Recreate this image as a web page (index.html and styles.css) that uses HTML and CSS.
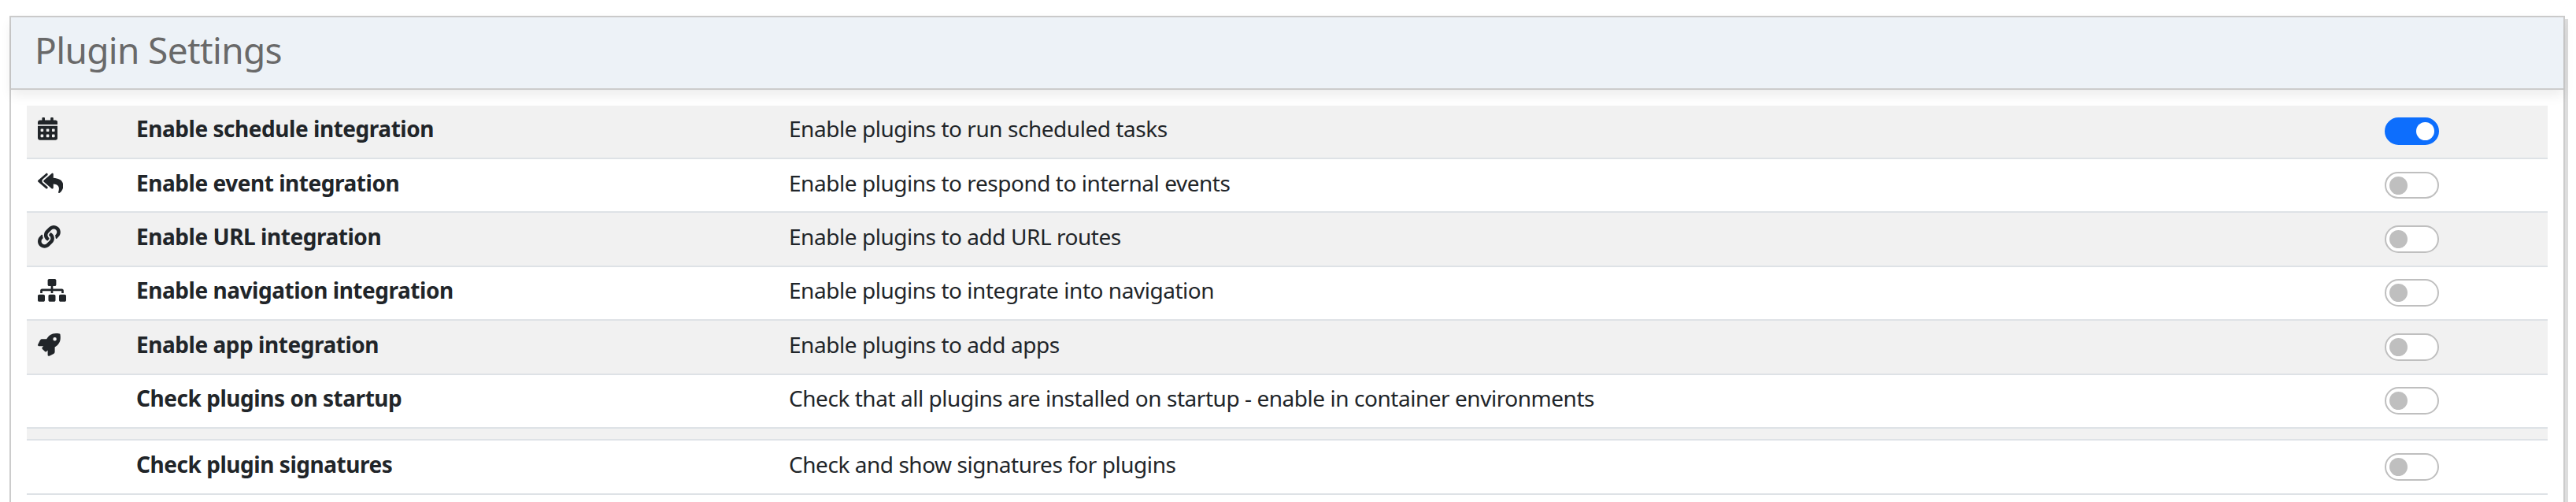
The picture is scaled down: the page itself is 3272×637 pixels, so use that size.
FILE: index.html
```html
<!DOCTYPE html>
<html lang="en">
<head>
<meta charset="utf-8">
<title>Plugin Settings</title>
<link rel="stylesheet" href="styles.css">
</head>
<body>
<main class="panel">
  <header class="panel-heading"><h1 class="title">Plugin Settings</h1></header>
  <div class="settings">
    <div class="row">
      <svg class="icon" viewBox="0 0 448 512"><path d="M0 464c0 26.500 21.500 48 48 48h352c26.500 0 48-21.500 48-48V192H0v272zm320-196c0-6.600 5.400-12 12-12h40c6.600 0 12 5.400 12 12v40c0 6.600-5.400 12-12 12h-40c-6.600 0-12-5.400-12-12v-40zm0 128c0-6.600 5.400-12 12-12h40c6.600 0 12 5.400 12 12v40c0 6.600-5.400 12-12 12h-40c-6.600 0-12-5.400-12-12v-40zM192 268c0-6.600 5.400-12 12-12h40c6.600 0 12 5.400 12 12v40c0 6.600-5.400 12-12 12h-40c-6.600 0-12-5.400-12-12v-40zm0 128c0-6.600 5.400-12 12-12h40c6.600 0 12 5.400 12 12v40c0 6.600-5.400 12-12 12h-40c-6.600 0-12-5.400-12-12v-40zM64 268c0-6.600 5.400-12 12-12h40c6.600 0 12 5.400 12 12v40c0 6.600-5.400 12-12 12H76c-6.600 0-12-5.400-12-12v-40zm0 128c0-6.600 5.400-12 12-12h40c6.600 0 12 5.400 12 12v40c0 6.600-5.400 12-12 12H76c-6.600 0-12-5.400-12-12v-40zM400 64h-48V16c0-8.800-7.200-16-16-16h-32c-8.800 0-16 7.200-16 16v48H160V16c0-8.800-7.200-16-16-16h-32c-8.800 0-16 7.200-16 16v48H48C21.500 64 0 85.500 0 112v48h448v-48c0-26.500-21.500-48-48-48z"/></svg>
      <strong class="name">Enable schedule integration</strong>
      <span class="desc">Enable plugins to run scheduled tasks</span>
      <span class="switch on"></span>
    </div>
    <div class="row low">
      <svg class="icon" viewBox="0 0 576 512"><path d="M136.309 189.836L312.313 37.851C327.720 24.546 352 35.348 352 56.015v82.763c129.182 10.231 224 52.212 224 183.548 0 61.441-39.582 122.309-83.333 154.132-13.653 9.931-33.111-2.533-28.077-18.631 38.512-123.162-3.922-169.482-112.590-182.015v84.175c0 20.701-24.300 31.453-39.687 18.164L136.309 226.164c-11.071-9.561-11.086-26.753 0-36.328zm-128 36.328L184.313 378.150C199.700 391.439 224 380.687 224 359.986v-15.818l-108.606-93.785A55.960 55.960 0 0 1 96 207.998a55.953 55.953 0 0 1 19.393-42.380L224 71.832V56.015c0-20.667-24.280-31.469-39.687-18.164L8.309 189.836c-11.086 9.575-11.071 26.767 0 36.328z"/></svg>
      <strong class="name">Enable event integration</strong>
      <span class="desc">Enable plugins to respond to internal events</span>
      <span class="switch short"></span>
    </div>
    <div class="row tall low">
      <svg class="icon" viewBox="0 0 512 512"><path d="M326.612 185.391c59.747 59.809 58.927 155.698.36 214.590-.11.12-.24.25-.36.37l-67.200 67.200c-59.270 59.270-155.699 59.262-214.960 0-59.270-59.260-59.270-155.700 0-214.960l37.106-37.106c9.840-9.840 26.786-3.300 27.294 10.606.648 17.722 3.826 35.527 9.690 52.721 1.986 5.822.567 12.262-3.783 16.612l-13.087 13.087c-28.026 28.026-28.905 73.660-1.155 101.960 28.024 28.579 74.086 28.749 102.325.51l67.200-67.190c28.191-28.191 28.073-73.757 0-101.830-3.701-3.694-7.429-6.564-10.341-8.569a16.037 16.037 0 0 1-6.947-12.606c-.396-10.567 3.348-21.456 11.698-29.806l21.054-21.055c5.521-5.521 14.182-6.199 20.584-1.731a152.482 152.482 0 0 1 20.522 17.197zM467.547 44.449c-59.261-59.262-155.690-59.270-214.960 0l-67.200 67.200c-.12.12-.25.25-.36.37-58.566 58.892-59.387 154.781.36 214.590a152.454 152.454 0 0 0 20.521 17.196c6.402 4.468 15.064 3.789 20.584-1.731l21.054-21.055c8.350-8.350 12.094-19.239 11.698-29.806a16.037 16.037 0 0 0-6.947-12.606c-2.912-2.005-6.640-4.875-10.341-8.569-28.073-28.073-28.191-73.639 0-101.830l67.200-67.190c28.239-28.239 74.300-28.069 102.325.51 27.750 28.300 26.872 73.934-1.155 101.960l-13.087 13.087c-4.350 4.350-5.769 10.790-3.783 16.612 5.864 17.194 9.042 34.999 9.690 52.721.509 13.906 17.454 20.446 27.294 10.606l37.106-37.106c59.271-59.259 59.271-155.699.001-214.959z"/></svg>
      <strong class="name">Enable URL integration</strong>
      <span class="desc">Enable plugins to add URL routes</span>
      <span class="switch"></span>
    </div>
    <div class="row">
      <svg class="icon" viewBox="0 0 640 512"><path d="M128 352H32c-17.670 0-32 14.330-32 32v96c0 17.670 14.330 32 32 32h96c17.670 0 32-14.330 32-32v-96c0-17.670-14.330-32-32-32zm-24-80h192v48h48v-48h192v48h48v-57.590c0-21.170-17.230-38.410-38.410-38.410H344v-64h40c17.670 0 32-14.330 32-32V32c0-17.670-14.330-32-32-32H256c-17.670 0-32 14.330-32 32v96c0 17.670 14.330 32 32 32h40v64H94.410C73.230 224 56 241.230 56 262.410V320h48v-48zm264 80h-96c-17.670 0-32 14.330-32 32v96c0 17.670 14.330 32 32 32h96c17.670 0 32-14.330 32-32v-96c0-17.670-14.330-32-32-32zm240 0h-96c-17.670 0-32 14.330-32 32v96c0 17.670 14.330 32 32 32h96c17.670 0 32-14.330 32-32v-96c0-17.670-14.330-32-32-32z"/></svg>
      <strong class="name">Enable navigation integration</strong>
      <span class="desc">Enable plugins to integrate into navigation</span>
      <span class="switch"></span>
    </div>
    <div class="row tall low">
      <svg class="icon" viewBox="0 0 512 512"><path d="M505.120 19.094c-1.189-5.531-6.658-11-12.207-12.188C460.716 0 435.507 0 410.407 0 307.175 0 245.269 55.203 199.052 128H94.838c-16.348.016-35.557 11.875-42.887 26.484L2.516 253.297A28.400 28.400 0 0 0 0 264a24.009 24.009 0 0 0 24.006 24h103.810l-22.474 22.469c-11.365 11.361-12.996 32.258 0 45.250l50.904 50.906c11.156 11.188 32.156 13.156 45.277 0l22.475-22.469V488a24.009 24.009 0 0 0 24.006 24 28.559 28.559 0 0 0 10.707-2.516l98.728-49.390c14.629-7.297 26.508-26.500 26.508-42.860V312.797c72.598-46.313 128.035-108.406 128.035-211.094.093-25.203.093-50.406-6.862-82.609zM384.040 168A40 40 0 1 1 424.050 128 40.023 40.023 0 0 1 384.040 168z"/></svg>
      <strong class="name">Enable app integration</strong>
      <span class="desc">Enable plugins to add apps</span>
      <span class="switch"></span>
    </div>
    <div class="row">
      <strong class="name">Check plugins on startup</strong>
      <span class="desc">Check that all plugins are installed on startup - enable in container environments</span>
      <span class="switch"></span>
    </div>
    <div class="row spacer"></div>
    <div class="row tall low">
      <strong class="name">Check plugin signatures</strong>
      <span class="desc">Check and show signatures for plugins</span>
      <span class="switch"></span>
    </div>
  </div>
</main>
</body>
</html>
```
FILE: styles.css
```css
* { box-sizing: border-box; }
body {
  margin: 0;
  height: 637px;
  padding: 20px 14px 0 12px;
  background: #fff;
  color: #212529;
  font: 28px/43px "Noto Sans", "Open Sans", sans-serif;
  letter-spacing: -0.46px;
}
.panel {
  height: 617px;
  border: 2px solid #ccc;
  border-bottom: 0;
  box-shadow: 4px 4px 0 #ddd;
}
.panel-heading {
  height: 92px;
  padding: 13px 0 0 30px;
  background: #edf2f7;
  border-bottom: 2px solid #ccc;
  box-shadow: 0 7px 14px rgba(0, 0, 0, .075);
}
.title {
  margin: 0;
  font-size: 46px;
  font-weight: 400;
  line-height: 56px;
  letter-spacing: -0.65px;
  color: #696969;
}
.settings { padding: 20px 20px 0; }
.row {
  display: grid;
  grid-template-columns: 125px 829px 2027px 69px;
  align-items: start;
  height: 68px;
  padding: 0 0 0 14px;
  border-bottom: 2px solid #dee2e6;
}
.row:nth-child(odd) { background: #f1f1f1; }
.row.tall { height: 69px; }
.row.low { padding-top: 1px; }
.row.spacer { height: 15px; }
.icon {
  display: block;
  height: 28.8px;
  margin-top: 15px;
  fill: #212529;
}
.name, .desc { padding-top: 8px; white-space: nowrap; }
.name { grid-column: 2; font-weight: 700; }
.desc { grid-column: 3; }
.switch {
  grid-column: 4;
  display: flex;
  align-items: center;
  width: 69px;
  height: 35px;
  margin-top: 15px;
  padding: 0 4px;
  border: 2px solid #bfbfbf;
  border-radius: 18px;
  background: #fff;
}
.switch::before {
  content: "";
  width: 23px;
  height: 23px;
  border-radius: 50%;
  background: #bfbfbf;
}
.switch.short { height: 34px; }
.switch.on {
  justify-content: flex-end;
  background: #0d6efd;
  border-color: #0d6efd;
}
.switch.on::before { background: #fff; }
```
